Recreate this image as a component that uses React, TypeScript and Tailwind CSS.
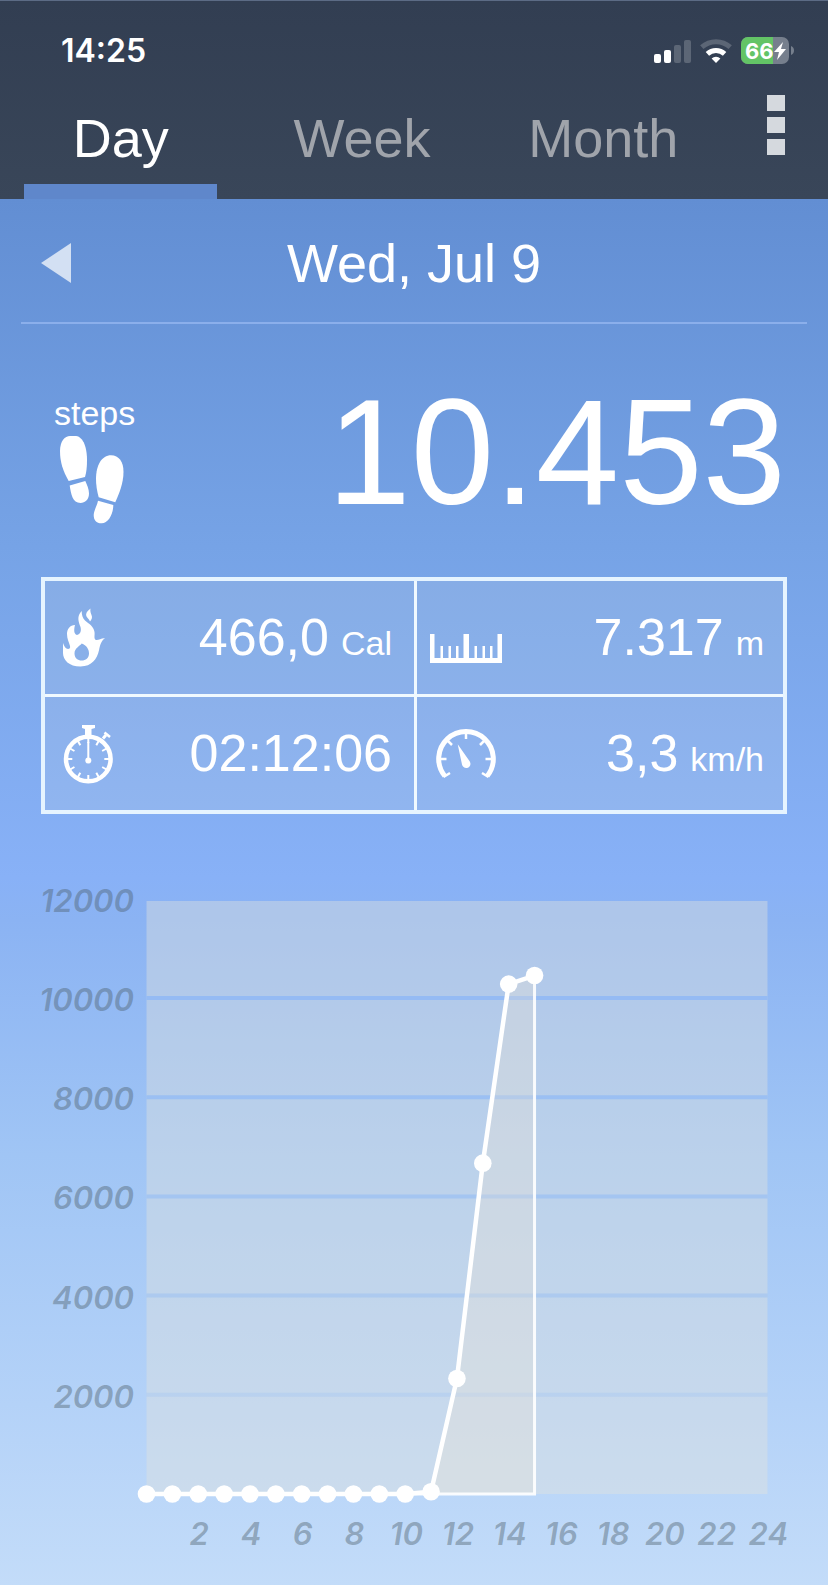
import type { ReactNode } from 'react';

const TABS = ['Day', 'Week', 'Month'];

// Cumulative steps, one value per hour from 0:00
const STEPS = [0, 0, 0, 0, 0, 0, 0, 0, 0, 0, 0, 45, 2330, 6670, 10280, 10453];

const GRID_LINES = [
  { value: 10000, opacity: 0.85 },
  { value: 8000, opacity: 0.7 },
  { value: 6000, opacity: 0.55 },
  { value: 4000, opacity: 0.4 },
  { value: 2000, opacity: 0.22 },
];

function StatusBar() {
  return (
    <div className="flex h-[43px] items-center justify-between pl-[61px] pr-[34px]">
      <span className="font-['Inter',sans-serif] text-[32px] font-semibold leading-none">14:25</span>
      <div className="flex items-center gap-[9px]">
        <svg width="37" height="24" viewBox="0 0 37 24" fill="white" aria-hidden="true">
          <rect x="0" y="15" width="7" height="9" rx="2" />
          <rect x="10" y="11" width="7" height="13" rx="2" />
          <rect x="20" y="6" width="7" height="18" rx="2" opacity="0.2" />
          <rect x="30" y="1" width="7" height="23" rx="2" opacity="0.2" />
        </svg>
        <svg width="32" height="24" viewBox="0 0 32 24" fill="none" stroke="white" strokeWidth="5" aria-hidden="true">
          <path d="M1.8 8.2a21.3 21.3 0 0 1 28.4 0" opacity="0.2" />
          <path d="M7.4 14.8a12.7 12.7 0 0 1 17.2 0" />
          <path d="M16 24l-4.4-4.5a6.3 6.3 0 0 1 8.8 0z" fill="white" stroke="none" />
        </svg>
        <svg width="53" height="27" viewBox="0 0 53 27" aria-hidden="true">
          <rect width="48" height="27" rx="7" fill="#767f8d" />
          <path d="M7 0h25v27H7a7 7 0 0 1-7-7V7a7 7 0 0 1 7-7z" fill="#63c466" />
          <path d="M50 9c4 1 4 8 0 9z" fill="#767f8d" />
          <text x="4" y="22" fill="white" className="font-['Inter',sans-serif] text-[22px] font-bold">
            66
          </text>
          <path d="M42 5l-9 10h5l-2 8 9-11h-5z" fill="white" />
        </svg>
      </div>
    </div>
  );
}

function Tabs() {
  return (
    <div className="flex items-start">
      <nav className="grid flex-1 grid-cols-3">
        {TABS.map((tab, i) => (
          <button key={tab} type="button" className="flex flex-col items-center pt-9">
            <span className={i === 0 ? 'text-[54px] leading-[60px]' : 'text-[54px] leading-[60px] text-[#a0a4ab]'}>
              {tab}
            </span>
            <span className={i === 0 ? 'mt-4 h-[15px] w-4/5 bg-[#5f87cb]' : 'mt-4 h-[15px] w-4/5'} />
          </button>
        ))}
      </nav>
      <button type="button" aria-label="Menu" className="flex w-[104px] flex-col items-center gap-[6px] pt-[23px]">
        <span className="h-4 w-[18px] bg-[#d5d9de]" />
        <span className="h-4 w-[18px] bg-[#d5d9de]" />
        <span className="h-4 w-[18px] bg-[#d5d9de]" />
      </button>
    </div>
  );
}

function FootprintsIcon() {
  return (
    <svg width="80" height="88" viewBox="0 0 80 88" fill="white" aria-hidden="true">
      <path d="M14.7 45C9 35 6 26 6 15 6 5 11 0 16 0h6c8 1 11 13 11 24 0 7-.5 12-2 17z" />
      <path d="M15.7 49.5 31.3 45c1.7 4 3.7 8 3.7 12.5 0 6-4 9.500-8.500 9.500-8 0-9.500-9-10.800-17.500z" />
      <path d="M44.700 61.300C43 55 42 49 42 43c0-14 6-23.700 15-23.700 8 0 12.500 6.700 12.500 16.700 0 11-4.500 22-8.200 30.300z" />
      <path d="M44 64.700 59.300 69c0 9-5 18.300-11.600 18.300-5.700 0-8-3.300-8-8.300.3-5 3.300-9 4.300-14.300z" />
    </svg>
  );
}

function FlameIcon() {
  return (
    <svg width="42" height="59" viewBox="0 0 42 59" fill="white" aria-hidden="true">
      <path
        fillRule="evenodd"
        d="M0 35C1 38 3 41 5 41c1.500 0 2.500-1 2-3C6 34 4 31 4 26c0-5 3-9 8-9 -1 4-1.500 9 2 10 3.500-1 4.500-4 3.500-8-2-5-4-11 1.200-16 0 4 .8 7 3.300 9.500C26 16 30.500 18 31.500 24c.5 3-1 7 1.500 8 2.500.5 5-2 9-1.700-4 2.700-5 7-6 12C34 51 29 58.500 17.500 58.500 6 58.500 0 52 0 45zM18.700 35.500C17 38 11.500 40 11.500 45.500c0 4.500 3.200 7 7.200 7s7.300-2.500 7.300-7c0-4.500-2.500-8-7.300-10z"
      />
      <path d="M27.500.5C24 3 22.500 5.500 23.300 8c.7 2 2.700 3 3.700 5.500 2-2.500 2.500-4 1.500-6.500-.8-2-1.500-4-1-6.500z" />
    </svg>
  );
}

function StopwatchIcon() {
  return (
    <svg width="51" height="60" viewBox="0 0 51 60" fill="none" stroke="white" aria-hidden="true">
      <circle cx="25.300" cy="35" r="22.300" strokeWidth="4.500" />
      {[0, 30, 60, 90, 120, 150, 180, 210, 240, 270, 300, 330].map((angle) => (
        <path key={angle} d="M25.3 14v5" strokeWidth="2" transform={`rotate(${angle} 25.3 35)`} />
      ))}
      <path d="M25.300 18v17" strokeWidth="2" />
      <circle cx="25.300" cy="36.500" r="3" fill="white" stroke="none" />
      <path d="M19 1h13v3l-3.500 1v6h-6.500V5L19 4z" fill="white" stroke="none" />
      <path d="M40 14.500l3-3.500" strokeWidth="3" />
      <path d="M41.500 8.500l5.500 4.500" strokeWidth="2.500" />
    </svg>
  );
}

function RulerIcon() {
  return (
    <svg width="72" height="50" viewBox="0 0 72 50" fill="white" aria-hidden="true">
      <path d="M0 21h4.500v24h29V21h5.500v24h28.500V21H72v29H0z" />
      <path d="M10.500 33H13v12h-2.500zM18.500 33H21v12h-2.500zM26 33h2.500v12H26zM44.500 33H47v12h-2.500zM52.500 33H55v12h-2.500zM60 33h2.500v12H60z" />
    </svg>
  );
}

function GaugeIcon() {
  return (
    <svg width="72" height="50" viewBox="-6 0 72 50" fill="none" stroke="white" aria-hidden="true">
      <path d="M8.800 47A27.300 27.300 0 1 1 51.200 47" strokeWidth="5" />
      <path d="M7.500 48l6.500-4M52.500 48l-6.500-4" strokeWidth="2.500" />
      <path d="M3 30h7.500M10.500 10.500l5.500 5.500M30 3v7M49.500 10.500 44 16M57 30h-7.500" strokeWidth="2.500" />
      <path
        d="M21.700 15.300 33.800 32.500c1.500 3 .2 5.500-2 6.200-2.500.8-5.200-.5-5.800-3.200z"
        fill="white"
        stroke="none"
      />
    </svg>
  );
}

type StatProps = {
  icon: ReactNode;
  value: string;
  unit?: string;
  className?: string;
};

function Stat({ icon, value, unit, className = '' }: StatProps) {
  return (
    <div className={`flex items-center justify-between border-[#f0f9ff] ${className}`}>
      {icon}
      <div className="flex items-baseline gap-3">
        <span className="text-[52px] leading-[113px]">{value}</span>
        {unit && <span className="text-[34px] leading-none">{unit}</span>}
      </div>
    </div>
  );
}

function StepsChart() {
  const x = (hour: number) => 146.5 + hour * 25.87;
  const y = (steps: number) => 680 - steps * 0.0496;
  const points = STEPS.map((steps, hour) => `${x(hour)},${y(steps)}`).join(' ');
  const last = x(STEPS.length - 1);

  return (
    <svg viewBox="0 0 828 771" className="block h-auto w-full" role="img" aria-label="Steps per hour">
      <rect x="146.500" y="87" width="621" height="593" fill="#e4e3dc" fillOpacity="0.4" />
      {GRID_LINES.map((line) => (
        <path
          key={line.value}
          d={`M146.5 ${y(line.value)}H767.5`}
          stroke="#8fb9f6"
          strokeWidth="4"
          strokeOpacity={line.opacity}
        />
      ))}

      <polygon points={`${points} ${last},680 147,680`} fill="#ede3d5" fillOpacity="0.3" />
      <path d={`M${last} ${y(10453)}V680H147`} fill="none" stroke="white" strokeWidth="3" strokeOpacity="0.9" />
      <polyline points={points} fill="none" stroke="white" strokeWidth="4.500" />
      {STEPS.map((steps, hour) => (
        <circle key={hour} cx={x(hour)} cy={y(steps)} r="8.800" fill="white" />
      ))}

      <g fill="#4b5d68" fillOpacity="0.42" className="font-['Inter',sans-serif] text-[31px] font-semibold italic">
        {[12000, 10000, 8000, 6000, 4000, 2000].map((value) => (
          <text key={value} x="134" y={y(value) + 13} textAnchor="end">
            {value}
          </text>
        ))}
        {[2, 4, 6, 8, 10, 12, 14, 16, 18, 20, 22, 24].map((hour) => (
          <text key={hour} x={x(hour) + 1} y="731" textAnchor="middle">
            {hour}
          </text>
        ))}
      </g>
    </svg>
  );
}

export default function App() {
  return (
    <div className="flex min-h-screen flex-col bg-[#c3dcf9] font-['Liberation_Sans',Arial,sans-serif] text-white">
      <header className="border-t border-[#5c6b85] bg-linear-to-b from-[#323e52] to-[#394659] pt-7">
        <StatusBar />
        <Tabs />
      </header>

      <main className="flex-1 bg-linear-[180deg,#628ed3_0%,#76a3e6_25%,#88b1f7_49%,#8bb3f3_52%,#a0c5f5_69%,#b4d2f8_87%,#c3dcf9_100%]">
        {/* Date */}
        <div className="mx-[21px] grid grid-cols-[30px_1fr_30px] items-center border-b-2 border-[#8bafeb] px-5 pt-[5px]">
          <button type="button" aria-label="Previous day">
            <svg width="30" height="40" viewBox="0 0 30 40" fill="#d3e0f3" aria-hidden="true">
              <path d="M0 20 30 0v40z" />
            </svg>
          </button>
          <h1 className="text-center text-[54px] leading-[118px]">Wed, Jul 9</h1>
        </div>

        {/* Steps */}
        <section className="flex items-start justify-between pb-[50px] pl-[54px] pr-[42px] pt-[53px]">
          <div className="mt-4">
            <div className="text-[34px] leading-10">steps</div>
            <div className="pt-[3px]">
              <FootprintsIcon />
            </div>
          </div>
          <div className="text-[150px] leading-none">10.453</div>
        </section>

        {/* Details */}
        <section className="mx-[41px] grid grid-cols-2 border-4 border-[#e6f4ff] bg-[#d8dcdc]/15 bg-clip-padding">
          <Stat icon={<FlameIcon />} value="466,0" unit="Cal" className="border-b-[3px] pl-[18px] pr-[22px]" />
          <Stat icon={<RulerIcon />} value="7.317" unit="m" className="border-b-[3px] border-l-[3px] pl-[13px] pr-[19px]" />
          <Stat icon={<StopwatchIcon />} value="02:12:06" className="pl-[18px] pr-[22px]" />
          <Stat icon={<GaugeIcon />} value="3,3" unit="km/h" className="border-l-[3px] pl-[13px] pr-[19px]" />
        </section>

        <StepsChart />
      </main>
    </div>
  );
}
